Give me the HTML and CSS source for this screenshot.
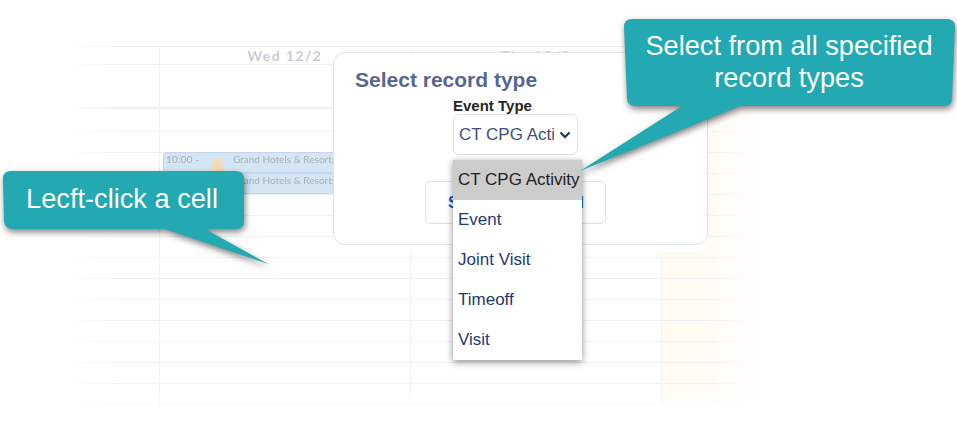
FILE: index.html
```html
<!DOCTYPE html>
<html lang="en">
<head>
<meta charset="utf-8">
<title>Select record type</title>
<link rel="stylesheet" href="styles.css">
</head>
<body>
<main class="stage">
  <section class="calendar">
    <div class="row head"><div class="cell"></div><div class="cell day">Wed 12/2</div><div class="cell day">Thu 12/3</div><div class="cell"></div></div>
    <div class="row allday"><div class="cell"></div><div class="cell"></div><div class="cell"></div><div class="cell"></div></div>
    <div class="row slot first dotted"><div class="cell"></div><div class="cell"></div><div class="cell"></div><div class="cell today"></div></div>
    <div class="row slot"><div class="cell"></div><div class="cell"></div><div class="cell"></div><div class="cell today"></div></div>
    <div class="row slot dotted"><div class="cell"></div><div class="cell"></div><div class="cell"></div><div class="cell today"></div></div>
    <div class="row slot"><div class="cell"></div><div class="cell"></div><div class="cell"></div><div class="cell today"></div></div>
    <div class="row slot dotted"><div class="cell"></div><div class="cell"></div><div class="cell"></div><div class="cell today"></div></div>
    <div class="row slot"><div class="cell"></div><div class="cell"></div><div class="cell"></div><div class="cell today"></div></div>
    <div class="row slot dotted"><div class="cell"></div><div class="cell"></div><div class="cell"></div><div class="cell today"></div></div>
    <div class="row slot"><div class="cell"></div><div class="cell"></div><div class="cell"></div><div class="cell today"></div></div>
    <div class="row slot dotted"><div class="cell"></div><div class="cell"></div><div class="cell"></div><div class="cell today"></div></div>
    <div class="row slot"><div class="cell"></div><div class="cell"></div><div class="cell"></div><div class="cell today"></div></div>
    <div class="row slot dotted"><div class="cell"></div><div class="cell"></div><div class="cell"></div><div class="cell today"></div></div>
    <div class="row slot"><div class="cell"></div><div class="cell"></div><div class="cell"></div><div class="cell today"></div></div>
    <div class="row slot dotted"><div class="cell"></div><div class="cell"></div><div class="cell"></div><div class="cell today"></div></div>
    <div class="row slot"><div class="cell"></div><div class="cell"></div><div class="cell"></div><div class="cell today"></div></div>
    <div class="events">
      <div class="event"><span class="time">10:00 -</span><svg class="pin" viewBox="0 0 16 16" width="16" height="16"><path d="M1 15 C1 11 3 9 4 7 C4 5 3 3 5 3 C6 3 6 4 7 4 C8 2 10 0 11 2 C12 4 11 6 12 8 C14 10 15 12 15 15 Z" fill="#f6dcb6"/></svg><span class="name">Grand Hotels &amp; Resorts</span></div>
      <div class="event"><span class="time"></span><span class="pin"></span><span class="name">Grand Hotels &amp; Resorts</span></div>
    </div>
  </section>

  <section class="modal">
    <h1 class="title">Select record type</h1>
    <div class="field">
      <div class="label">Event Type</div>
      <div class="select"><span class="value">CT CPG Activity</span>
        <svg class="chev" viewBox="0 0 12 8" width="12" height="8"><path d="M1.5 1.5 L6 6 L10.5 1.5" fill="none" stroke="#1f2f57" stroke-width="2"/></svg>
      </div>
      <ul class="menu">
        <li class="opt active">CT CPG Activity</li>
        <li class="opt">Event</li>
        <li class="opt">Joint Visit</li>
        <li class="opt">Timeoff</li>
        <li class="opt">Visit</li>
      </ul>
    </div>
    <div class="actions"><button class="btn">Select</button><button class="btn">Cancel</button></div>
  </section>

  <aside class="callout left">
    <svg class="bubble" viewBox="0 0 280 110" width="280" height="110"><path d="M9 1 H233 Q242 1 242 9 V51 Q242 59 233 59 H203 L266 94 L163 59 H11 Q3 59 2 51 L1 9 Q1 1 9 1 Z" fill="#22a9b2"/></svg>
    <p class="say">Lecft-click a cell</p>
  </aside>

  <aside class="callout right">
    <svg class="bubble" viewBox="0 0 400 170" width="400" height="170"><path d="M70 1 H385 Q393 1 393 9 L390 80 Q390 88 382 88 H178 L18 153 L120 88 H74 Q65 88 65 80 L62 9 Q62 1 70 1 Z" fill="#22a9b2"/></svg>
    <p class="say">Select from all specified record types</p>
  </aside>
</main>
</body>
</html>
```
FILE: styles.css
```css
* { box-sizing: border-box; }
html, body { margin: 0; height: 100%; background: #fff; overflow: hidden; }
.stage {
  position: relative;
  width: 957px;
  height: 421px;
  padding: 46px 0 0 70px;
  font-family: "Liberation Sans", Arial, sans-serif;
}

/* calendar */
.calendar {
  position: relative;
  width: 685px;
  -webkit-mask-image: linear-gradient(90deg, transparent 0, #000 50px, #000 640px, transparent 100%), linear-gradient(180deg, #000 340px, transparent 368px);
  mask-image: linear-gradient(90deg, transparent 0, #000 50px, #000 640px, transparent 100%), linear-gradient(180deg, #000 340px, transparent 368px);
  -webkit-mask-composite: source-in;
  mask-composite: intersect;
}
.row {
  display: grid;
  grid-template-columns: 90px 251px 251px 93px;
  border-bottom: 1px solid #eff0f3;
}
.head { border-top: 1px solid #eff0f3; height: 19px; }
.allday { height: 44px; border-bottom-width: 2px; }
.slot { height: 21px; }
.slot.first { height: 23px; }
.slot.dotted { border-bottom: 1px dotted #e6e7ea; }
.cell { border-right: 1px solid #eff0f3; }
.cell:last-child { border-right: 0; }
.today { background: #fffbf3; }
.day {
  text-align: center;
  font: 700 14px/17px Lato, sans-serif;
  letter-spacing: 1.4px;
  color: #c6cbdc;
}

/* events */
.events { position: absolute; left: 93px; top: 106px; width: 175px; }
.event {
  display: flex;
  align-items: flex-start;
  height: 21px;
  padding-left: 2px;
  background: #d4e6f3;
  border: 1px solid #c3d6ee;
  border-radius: 3px 0 0 3px;
  font: 400 10px/12px Lato, sans-serif;
  letter-spacing: .2px;
  color: #a9aeb5;
  white-space: nowrap;
  overflow: hidden;
}
.time { width: 44px; flex: none; }
.pin { width: 16px; height: 16px; flex: none; margin-top: 3px; }
.name { margin-left: 7px; letter-spacing: 0; }

/* modal */
.modal {
  position: absolute;
  left: 333px;
  top: 52px;
  width: 375px;
  height: 193px;
  padding: 15px 21px 0;
  background: #fff;
  border: 1px solid #dfe1ea;
  border-radius: 12px;
  box-shadow: 0 7px 0 #fff;
}
.title { margin: 0; font-size: 21px; line-height: 24px; font-weight: 700; color: #56688f; }
.field { position: relative; margin: 6px 0 0 98px; width: 125px; }
.label { font-size: 15px; line-height: 16px; font-weight: 700; color: #262626; }
.select {
  display: flex;
  align-items: center;
  height: 41px;
  padding: 0 5px;
  border: 1px solid #dfe1ea;
  border-radius: 6px;
  background: #fff;
  font-size: 17px;
  color: #3f4f76;
}
.value { width: 95px; overflow: hidden; white-space: nowrap; }
.chev { margin-left: 5px; flex: none; }
.menu {
  position: absolute;
  left: 0;
  top: 62px;
  z-index: 2;
  width: 129px;
  margin: 0;
  padding: 0;
  list-style: none;
  background: #fff;
  box-shadow: 0 2px 7px rgba(0, 0, 0, .45);
}
.opt { height: 40px; padding-left: 5px; font-size: 17px; line-height: 39px; color: #1f3a6e; }
.opt.active { background: #ccc; color: #222; }
.actions { display: flex; gap: 10px; margin: 26px 0 0 70px; width: 181px; }
.btn {
  flex: 1 1 0;
  min-width: 0;
  height: 43px;
  background: #fff;
  border: 1px solid #dfe1ea;
  border-radius: 5px;
  font: 700 16px "Liberation Sans", sans-serif;
  color: #0b63c5;
}
.btn:first-child { padding: 0 0 0 22px; text-align: left; }
.btn:last-child { padding: 0 21px 0 0; text-align: right; }

/* callouts */
.callout { position: absolute; z-index: 3; }
.bubble { display: block; overflow: visible; filter: drop-shadow(1px 3px 3px rgba(0, 0, 0, .5)); }
.say { position: absolute; margin: 0; color: #fff; font-size: 27.2px; line-height: 32px; text-align: center; }
.callout.left { left: 2px; top: 170px; }
.callout.left .say { left: 1px; top: 13px; width: 238px; }
.callout.right { left: 562px; top: 18px; }
.callout.right .say { left: 63px; top: 12px; width: 328px; }
```
